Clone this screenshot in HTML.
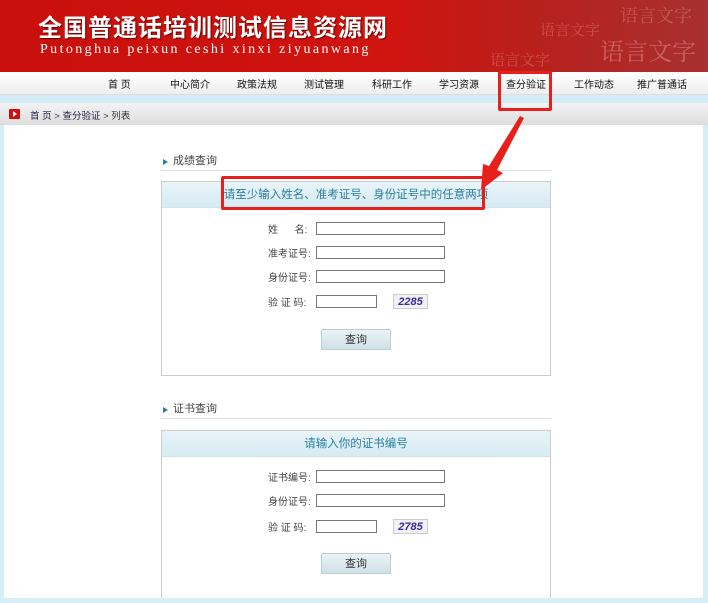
<!DOCTYPE html>
<html><head><meta charset="utf-8"><style>
*{margin:0;padding:0;box-sizing:border-box}
body{width:708px;height:603px;overflow:hidden;background:#d4edf6;font-family:"Liberation Sans","Noto Sans CJK SC",sans-serif;font-size:10px;color:#333;position:relative;line-height:1}
.hdr{position:absolute;left:0;top:0;width:708px;height:72px;background:linear-gradient(90deg,#c8100c 0%,#d0140f 55%,#b8201c 75%,#a83030 100%)}
.t1{position:absolute;left:38px;top:16px;font-size:24px;line-height:26px;font-weight:bold;color:#fff;letter-spacing:1px;text-shadow:1px 1px 1px #600}
.t2{position:absolute;left:40px;top:43px;font-family:"Liberation Serif",serif;font-size:14px;line-height:14px;color:#fff;letter-spacing:2.4px}
.deco{position:absolute;color:rgba(255,190,190,.3);font-family:"Noto Serif CJK SC",serif;line-height:1}
.nav{position:absolute;left:0;top:72px;width:708px;height:23px;background:linear-gradient(#fff,#eee);border-bottom:1px solid #ddd}
.nav span{position:absolute;top:9px;font-size:10px;color:#111}
.crumb{position:absolute;left:0;top:103px;width:708px;height:22px;background:linear-gradient(#f4f4f4,#ddd)}
.main{position:absolute;left:4px;top:125px;width:699px;height:473px;background:#fff;overflow:hidden}
.sec{position:absolute;left:157px;width:390px;border-bottom:1px solid #ddd;font-size:11px;color:#444;padding-left:12px;height:15px;line-height:11px}
.sec:before{content:"";position:absolute;left:2px;top:3px;border-left:5px solid #2a7fa8;border-top:3px solid transparent;border-bottom:3px solid transparent}
.box{position:absolute;left:157px;width:390px;border:1px solid #ccc;background:#fff}
.bh{height:26px;background:linear-gradient(#e8f4f8,#d6ebf2);text-align:center;color:#2a7fa0;font-size:11.5px;line-height:26px;border-bottom:1px solid #d0e4ea}
.lb{position:absolute;font-size:10px;color:#444;line-height:13px}
.in{position:absolute;height:13px;border:1px solid #777;background:#fff}
.cap{position:absolute;width:35px;height:15px;border:1px solid #ccc;background:#f1f1f4;color:#3a2a9a;font-weight:bold;font-style:italic;font-size:11px;text-align:center;line-height:14px}
.btn{position:absolute;width:70px;height:21px;background:linear-gradient(#eaf3f6,#cfe1e8);border:1px solid #bcd;text-align:center;line-height:20px;font-size:11px;color:#333}
.red{position:absolute;border:3px solid #e8201c;border-radius:2px}
</style></head><body>
<div class="hdr">
<div class="deco" style="left:540px;top:22px;font-size:15px">语言文字</div>
<div class="deco" style="left:620px;top:6px;font-size:18px">语言文字</div>
<div class="deco" style="left:490px;top:52px;font-size:15px">语言文字</div>
<div class="deco" style="left:600px;top:38px;font-size:24px;color:rgba(255,200,200,.35)">语言文字</div>
<div class="t1">全国普通话培训测试信息资源网</div>
<div class="t2">Putonghua peixun ceshi xinxi ziyuanwang</div>
</div>
<div class="nav">
<span style="left:108px">首 页</span><span style="left:170px">中心简介</span><span style="left:237px">政策法规</span><span style="left:304px">测试管理</span><span style="left:372px">科研工作</span><span style="left:439px">学习资源</span><span style="left:506px">查分验证</span><span style="left:574px">工作动态</span><span style="left:637px">推广普通话</span>
</div>
<div class="crumb">
<div style="position:absolute;left:9px;top:6px;width:11px;height:10px;background:#d01010;border-radius:1px"><div style="position:absolute;left:4px;top:2px;border-left:4px solid #fff;border-top:3px solid transparent;border-bottom:3px solid transparent"></div></div>
<div style="position:absolute;left:30px;top:9px;font-size:9.5px;color:#333"><span style="color:#224">首 页</span> &gt; <span style="color:#224">查分验证</span> &gt; 列表</div>
</div>
<div class="main">

<div class="sec" style="top:31px">成绩查询</div>
<div class="box" style="top:56px;height:195px">
<div class="bh">请至少输入姓名、准考证号、身份证号中的任意两项</div>
<div class="lb" style="left:106px;top:42px">姓&nbsp;&nbsp;&nbsp;&nbsp;&nbsp;&nbsp;名:</div><div class="in" style="left:154px;top:40px;width:129px"></div>
<div class="lb" style="left:106px;top:66px">准考证号:</div><div class="in" style="left:154px;top:64px;width:129px"></div>
<div class="lb" style="left:106px;top:90px">身份证号:</div><div class="in" style="left:154px;top:88px;width:129px"></div>
<div class="lb" style="left:106px;top:115px">验&nbsp;证&nbsp;码:</div><div class="in" style="left:154px;top:113px;width:61px"></div>
<div class="cap" style="left:231px;top:112px">2285</div>
<div class="btn" style="left:159px;top:147px">查询</div>
</div>

<div class="sec" style="top:279px">证书查询</div>
<div class="box" style="top:305px;height:180px">
<div class="bh">请输入你的证书编号</div>
<div class="lb" style="left:106px;top:41px">证书编号:</div><div class="in" style="left:154px;top:39px;width:129px"></div>
<div class="lb" style="left:106px;top:65px">身份证号:</div><div class="in" style="left:154px;top:63px;width:129px"></div>
<div class="lb" style="left:106px;top:91px">验&nbsp;证&nbsp;码:</div><div class="in" style="left:154px;top:89px;width:61px"></div>
<div class="cap" style="left:231px;top:88px">2785</div>
<div class="btn" style="left:159px;top:122px">查询</div>
</div>
</div>

<div class="red" style="left:498px;top:71px;width:54px;height:40px"></div>
<div class="red" style="left:221px;top:176px;width:264px;height:34px"></div>
<svg style="position:absolute;left:0;top:0" width="708" height="603"><polygon points="520,116 524,118 497,170 503,173 481,190 483,164 489,166" fill="#e8201c"/></svg>
</body></html>
